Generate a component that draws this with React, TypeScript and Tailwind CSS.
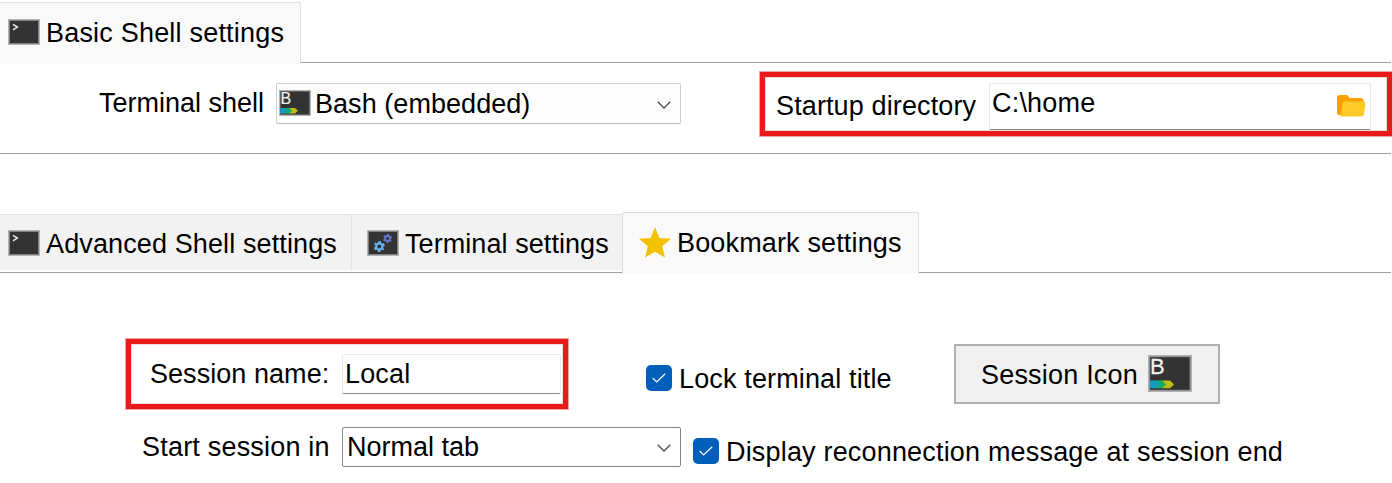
import type { ReactNode } from "react";

function Label({ children, className = "" }: { children: ReactNode; className?: string }) {
  return <span className={`block h-[30px] shrink-0 leading-[30px] whitespace-nowrap ${className}`}>{children}</span>;
}

function ShellIcon({ className = "" }: { className?: string }) {
  return (
    <svg className={`shrink-0 ${className}`} width="32" height="26" viewBox="0 0 32 26">
      <rect width="32" height="26" fill="#b2b2b2" />
      <rect x="1" y="1" width="30" height="24" fill="#808080" />
      <rect x="2" y="2" width="28" height="22" fill="#333" />
      <path d="M5 5.3 9.3 8.1 5 10.9" fill="none" stroke="#eee" strokeWidth="1.5" />
    </svg>
  );
}

function GearsIcon({ className = "" }: { className?: string }) {
  return (
    <svg className={`shrink-0 ${className}`} width="32" height="26" viewBox="0 0 32 26">
      <rect width="32" height="26" fill="#b2b2b2" />
      <rect x="1" y="1" width="30" height="24" fill="#808080" />
      <rect x="2" y="2" width="28" height="22" fill="#333" />
      <circle cx="12.3" cy="16.5" r="3.1" fill="none" stroke="#64b5f6" strokeWidth="2.2" />
      <circle cx="12.3" cy="16.5" r="4.7" fill="none" stroke="#64b5f6" strokeWidth="1.8" strokeDasharray="2.5 2.42" strokeDashoffset="1.25" transform="rotate(30 12.3 16.5)" />
      <circle cx="20.6" cy="8.5" r="2.5" fill="none" stroke="#6575d6" strokeWidth="1.8" />
      <circle cx="20.6" cy="8.5" r="3.8" fill="none" stroke="#6575d6" strokeWidth="1.5" strokeDasharray="2 1.98" strokeDashoffset="1" transform="rotate(30 20.6 8.5)" />
    </svg>
  );
}

function BashIcon({ className = "" }: { className?: string }) {
  return (
    <svg className={`shrink-0 ${className}`} viewBox="0 0 32 26" preserveAspectRatio="none">
      <rect width="32" height="26" fill="#b2b2b2" />
      <rect x="1" y="1" width="30" height="24" fill="#808080" />
      <rect x="1.6" y="1.6" width="28.6" height="22.8" fill="#333" />
      <text x="1.4" y="13.7" className="fill-[#f0f0f0] text-[16px] tracking-normal" stroke="#f0f0f0" strokeWidth=".2">B</text>
      <path d="M10 18h6l3 2.7-3 2.7h-6z" fill="#c0bc12" />
      <path d="M5 18h5.2l3 2.7-3 2.7H5z" fill="#12ae68" />
      <path d="M1.3 18h4.2l2.8 2.7-2.8 2.7H1.3z" fill="#159bc4" />
    </svg>
  );
}

function Chevron({ className = "" }: { className?: string }) {
  return (
    <svg className={`shrink-0 ${className}`} width="14" height="8" viewBox="0 0 14 8">
      <path d="M.7.7 7 7 13.3.7" fill="none" stroke="#4a4a4a" strokeWidth="1.25" />
    </svg>
  );
}

function CheckBox({ className = "" }: { className?: string }) {
  return (
    <span className={`flex size-[26px] shrink-0 items-center justify-center rounded-[5px] bg-[#005fb8] ${className}`}>
      <svg width="14" height="10" viewBox="0 0 14 10">
        <path d="M.7 5 4.7 9 13.2.7" fill="none" stroke="#fff" strokeWidth="1.2" />
      </svg>
    </span>
  );
}

export default function App() {
  return (
    <div className="h-[483px] w-[1392px] overflow-hidden bg-white font-['Liberation_Sans',Arial,sans-serif] text-[27px] tracking-[0.15px] text-black">
      <div className="flex h-[64px] items-start pt-[2px]">
        <div className="flex h-[62px] w-[301px] shrink-0 items-start rounded-tr-[2px] border-t border-r border-[#e0e0e0] bg-[#f9f9f9] pl-2">
          <ShellIcon className="mt-4" />
          <Label className="mt-[15px] ml-[6px] tracking-[0.2px]">Basic Shell settings</Label>
        </div>
        <div className="h-[61px] w-[1090px] border-b border-[#a0a0a0]" />
      </div>

      <div className="flex h-[90px] items-start">
        <div className="flex h-[90px] w-[1391px] shrink-0 items-start border-b border-[#a0a0a0]">
          <Label className="mt-[24px] ml-[99px] w-[177px] tracking-[0px]">Terminal shell</Label>
          <div className="mt-[19px] flex h-[41px] w-[405px] shrink-0 items-start rounded-[2px] border border-[#cfcfcf] border-b-[#bbb] bg-[#fdfdfd] pl-[2px]">
            <BashIcon className="mt-[6px] h-[26px] w-[32px]" />
            <Label className="mt-[5px] ml-[4px] w-[342px] tracking-[0.05px]">Bash (embedded)</Label>
            <Chevron className="mt-[17px]" />
          </div>
          <div className="mt-[8px] ml-[79px] flex h-[64px] w-[632px] shrink-0 items-start border-5 border-[#e81a1a] shadow-[inset_0_0_0_1px_#fbdada,0_0_0_1px_#f5a3a3]">
            <Label className="mt-[14px] ml-[11px] w-[213px] tracking-[0.12px]">Startup directory</Label>
            <div className="mt-[6px] flex h-[47px] w-[382px] shrink-0 items-start rounded-[2px] border border-[#e8e8e8] border-b-[#868686] bg-white">
              <Label className="ml-[2px] mt-[4px] w-[345px] tracking-[0.2px]">C:\home</Label>
              <svg className="mt-[11px] shrink-0" width="29" height="22" viewBox="0 0 29 22">
                <path d="M2.5 0H10l2.7 3H24q2.5 0 2.5 2.5V20H2.5Q0 20 0 17.5v-15Q0 0 2.5 0z" fill="#ffa000" />
                <path d="M7.5 6.5h18.8q2.5 0 2.2 2.5l-1.5 10q-.4 2.5-3 2.5H2.5Q3.8 21 4 19L5.2 9q.3-2.5 2.3-2.5z" fill="#ffca28" />
              </svg>
            </div>
          </div>
        </div>
      </div>

      <div className="mt-[58px] flex h-[62px] items-start">
        <div className="flex h-[61px] w-[622px] shrink-0 items-start border-b border-[#a0a0a0] pt-[2px]">
          <div className="flex h-[56px] w-[352px] shrink-0 items-start border-t border-r border-[#e3e3e3] bg-[#f2f2f2] pl-2">
            <ShellIcon className="mt-[15px]" />
            <Label className="mt-[14px] ml-[6px] tracking-[0.12px]">Advanced Shell settings</Label>
          </div>
          <div className="flex h-[56px] w-[270px] shrink-0 items-start border-t border-[#e3e3e3] bg-[#f2f2f2] pl-[15px]">
            <GearsIcon className="mt-[15px]" />
            <Label className="mt-[14px] ml-[6px] tracking-[0.07px]">Terminal settings</Label>
          </div>
        </div>
        <div className="flex h-[62px] w-[297px] shrink-0 items-start rounded-t-[2px] border border-b-0 border-[#e0e0e0] bg-[#f9f9f9] pl-4">
          <svg className="mt-[14px] shrink-0" width="32" height="31" viewBox="0 0 32 31">
            <path d="m16 0 4.4 10.9L32 11.7l-8.8 7.5L26 30.5 16 24.7 6 30.5l2.8-11.3L0 11.7l11.6-.8z" fill="#f2c200" />
          </svg>
          <Label className="mt-[15px] ml-[6px] tracking-[0.15px]">Bookmark settings</Label>
        </div>
        <div className="h-[61px] w-[472px] border-b border-[#a0a0a0]" />
      </div>

      <div className="mt-[64px] flex h-[89px] items-start">
        <div className="mt-px ml-[126px] flex h-[70px] w-[442px] shrink-0 items-start border-5 border-[#e81a1a] shadow-[inset_0_0_0_1px_#fbdada,0_0_0_1px_#f5a3a3]">
          <Label className="mt-[15px] ml-[19px] w-[192px] tracking-[0.05px]">Session name:</Label>
          <div className="mt-[10px] flex h-[40px] w-[219px] shrink-0 items-start rounded-[2px] border border-[#e8e8e8] border-b-[#868686] bg-white">
            <Label className="mt-[4px] ml-[2px]">Local</Label>
          </div>
        </div>
        <CheckBox className="mt-[27px] ml-[78px]" />
        <Label className="mt-[26px] ml-[7px] w-[275px] tracking-[0.14px]">Lock terminal title</Label>
        <div className="mt-[6px] flex h-[60px] w-[266px] shrink-0 items-start border-2 border-[#b0b0b0] bg-[#f0f0f0]">
          <Label className="mt-[14px] ml-[25px] w-[167px] tracking-[0.2px]">Session Icon</Label>
          <BashIcon className="mt-[9px] h-[37px] w-[44px]" />
        </div>
      </div>

      <div className="flex h-[56px] items-start">
        <Label className="mt-[5px] ml-[142px] w-[200px] tracking-[0.2px]">Start session in</Label>
        <div className="flex h-[40px] w-[339px] shrink-0 items-start rounded-[2px] border border-[#858585] bg-white">
          <Label className="mt-[4px] ml-[4px] w-[310px] tracking-[0px]">Normal tab</Label>
          <Chevron className="mt-[16px]" />
        </div>
        <CheckBox className="mt-[11px] ml-[12px]" />
        <Label className="mt-[10px] ml-[7px] tracking-[0.18px]">Display reconnection message at session end</Label>
      </div>
    </div>
  );
}
